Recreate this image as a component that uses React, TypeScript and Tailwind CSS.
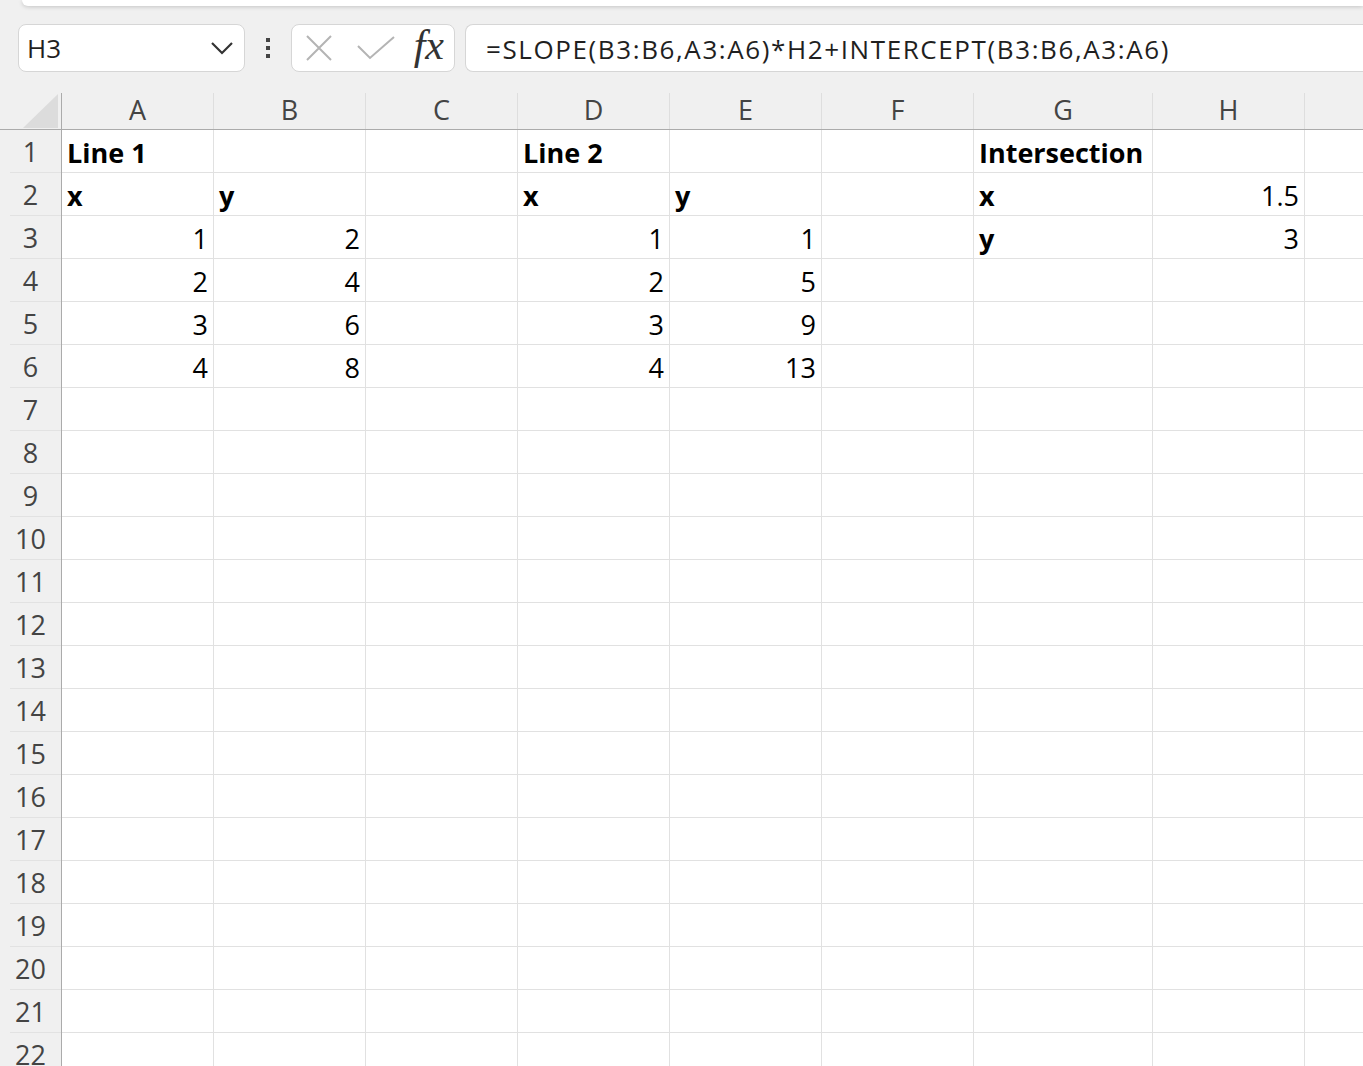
import React from "react";

const cols = [
  { name: "A", w: "w-[152px]" },
  { name: "B", w: "w-[152px]" },
  { name: "C", w: "w-[152px]" },
  { name: "D", w: "w-[152px]" },
  { name: "E", w: "w-[152px]" },
  { name: "F", w: "w-[152px]" },
  { name: "G", w: "w-[179px]" },
  { name: "H", w: "w-[152px]" },
  { name: "I", w: "w-[152px]" },
];

type Cell = { v: string; bold?: boolean; num?: boolean };

const data: Record<number, Record<string, Cell>> = {
  1: { A: { v: "Line 1", bold: true }, D: { v: "Line 2", bold: true }, G: { v: "Intersection", bold: true } },
  2: {
    A: { v: "x", bold: true },
    B: { v: "y", bold: true },
    D: { v: "x", bold: true },
    E: { v: "y", bold: true },
    G: { v: "x", bold: true },
    H: { v: "1.5", num: true },
  },
  3: {
    A: { v: "1", num: true },
    B: { v: "2", num: true },
    D: { v: "1", num: true },
    E: { v: "1", num: true },
    G: { v: "y", bold: true },
    H: { v: "3", num: true },
  },
  4: { A: { v: "2", num: true }, B: { v: "4", num: true }, D: { v: "2", num: true }, E: { v: "5", num: true } },
  5: { A: { v: "3", num: true }, B: { v: "6", num: true }, D: { v: "3", num: true }, E: { v: "9", num: true } },
  6: { A: { v: "4", num: true }, B: { v: "8", num: true }, D: { v: "4", num: true }, E: { v: "13", num: true } },
};

const rows = Array.from({ length: 22 }, (_, i) => i + 1);

const cellFont = { fontFamily: "'Open Sans', 'Noto Sans', sans-serif" };

export default function App() {
  return (
    <div className="w-[1363px] h-[1066px] overflow-hidden bg-[#f0f0f0] text-[#1f1f1f]" style={{ fontFamily: "'Open Sans', 'Noto Sans', sans-serif" }}>
      {/* ribbon edge */}
      <div className="ml-[22px] h-[6px] bg-white rounded-bl-lg shadow-[0_1px_4px_rgba(0,0,0,0.18)]" />

      {/* formula bar */}
      <div className="flex items-center h-[48px] mt-[18px] ml-[18px]">
        <div className="w-[227px] h-full bg-white border border-[#d6d6d6] rounded-lg flex items-center justify-between pl-[8px] pr-[10px]">
          <span className="text-[26px] text-[#1f1f1f]">H3</span>
          <svg width="24" height="14" viewBox="0 0 24 14" fill="none" stroke="#333" strokeWidth="2.2">
            <path d="M2 2l10 10 10-10" />
          </svg>
        </div>
        <div className="w-[46px] flex flex-col items-center gap-[4px]">
          <div className="w-[4px] h-[4px] bg-[#444]" />
          <div className="w-[4px] h-[4px] bg-[#444]" />
          <div className="w-[4px] h-[4px] bg-[#444]" />
        </div>
        <div className="w-[164px] h-full bg-white border border-[#d6d6d6] rounded-lg flex items-center pl-[13px] pr-[10px]">
          <svg width="28" height="28" viewBox="0 0 28 28" fill="none" stroke="#b4b4b4" strokeWidth="2">
            <path d="M2 2l24 24M26 2L2 26" />
          </svg>
          <svg className="ml-[24px]" width="38" height="24" viewBox="0 0 38 24" fill="none" stroke="#b4b4b4" strokeWidth="2">
            <path d="M1 10l12 12L37 1" />
          </svg>
          <span className="ml-auto text-[42px] italic text-[#333] leading-none -mt-[6px]" style={{ fontFamily: "'Liberation Serif', serif" }}>
            fx
          </span>
        </div>
        <div className="ml-[10px] flex-1 h-full bg-white border border-[#d6d6d6] border-r-0 rounded-l-lg flex items-center pl-[20px]">
          <span className="text-[26px] text-[#1f1f1f] tracking-[1.6px] pt-[2px]" style={cellFont}>
            =SLOPE(B3:B6,A3:A6)*H2+INTERCEPT(B3:B6,A3:A6)
          </span>
        </div>
      </div>

      {/* sheet */}
      <div className="mt-[21px]">
        {/* column headers */}
        <div className="flex h-[37px] border-b border-[#ababab]">
          <div className="w-[62px] shrink-0 border-r border-[#ababab] relative">
            <svg className="absolute left-[23px] top-[1px]" width="35" height="34" viewBox="0 0 35 34">
              <polygon points="0,34 35,34 35,0" fill="#dcdcdc" />
            </svg>
          </div>
          {cols.map((c) => (
            <div
              key={c.name}
              className={`${c.w} shrink-0 border-r border-[#dedede] flex items-center justify-center pb-[3px] text-[27px] text-[#444] leading-none`}
            >
              {c.name}
            </div>
          ))}
        </div>

        {rows.map((r) => (
          <div key={r} className="flex h-[43px]">
            <div className="w-[62px] shrink-0 border-r border-[#ababab] flex">
              <div className="ml-[10px] flex-1 border-b border-[#e2e2e2] flex items-center justify-center pr-[10px] text-[27px] text-[#444] leading-none">
                {r}
              </div>
            </div>
            {cols.map((c) => {
              const cell = data[r]?.[c.name];
              return (
                <div
                  key={c.name}
                  className={`${c.w} shrink-0 bg-white border-r border-b border-[#e1e1e1] flex items-end px-[5px] pb-[2px] text-[27px] leading-[34px] text-black ${
                    cell?.num ? "justify-end" : "justify-start"
                  } ${cell?.bold ? "font-bold" : ""}`}
                  style={cellFont}
                >
                  {cell?.v}
                </div>
              );
            })}
          </div>
        ))}
      </div>
    </div>
  );
}
